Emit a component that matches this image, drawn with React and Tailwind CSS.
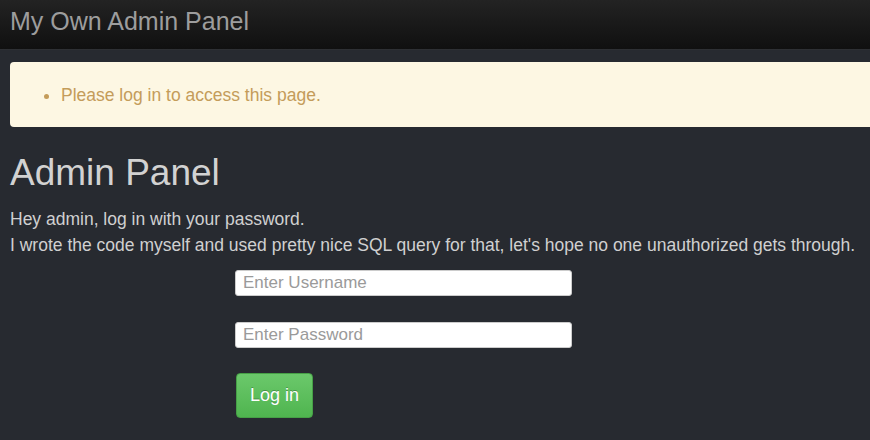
import React from 'react';

const font = { fontFamily: '"Liberation Sans", Arial, sans-serif' };

const App = () => {
  return (
    <div className="min-h-[440px] w-[870px] overflow-hidden bg-[#272a30]" style={font}>
      <nav className="h-[50px] bg-gradient-to-b from-[#232323] to-[#101010] border-b border-[#2e3034] flex items-center px-[10px]">
        <span className="text-[25px] leading-none text-[#9d9d9d] -mt-[6px]">My Own Admin Panel</span>
      </nav>

      <div className="pl-[10px] pt-[12px]">
        <div className="w-[900px] h-[65px] rounded-[4px] bg-[#fdf7e3] flex items-center">
          <ul className="list-disc pl-[51px] mt-[1px] text-[17.5px] text-[#c49c5a] marker:text-[#c49c5a]">
            <li>Please log in to access this page.</li>
          </ul>
        </div>
      </div>

      <div className="px-[10px]">
        <h1 className="text-[37px] leading-none text-[#d2d2d2] mt-[27px]">Admin Panel</h1>
        <p className="text-[17.5px] leading-[26px] text-[#d0d0d0] mt-[15px]">
          Hey admin, log in with your password.
          <br />
          I wrote the code myself and used pretty nice SQL query for that, let's hope no one unauthorized gets through.
        </p>

        <form className="ml-[225px] mt-[12px] flex flex-col items-start" onSubmit={(e) => e.preventDefault()}>
          <input
            type="text"
            placeholder="Enter Username"
            className="w-[337px] h-[26px] rounded-[3px] border border-[#cccccc] bg-white px-[7px] text-[17px] placeholder:text-[#9a9a9a] outline-none"
          />
          <input
            type="password"
            placeholder="Enter Password"
            className="mt-[26px] w-[337px] h-[26px] rounded-[3px] border border-[#cccccc] bg-white px-[7px] text-[17px] placeholder:text-[#9a9a9a] outline-none"
          />
          <button
            type="submit"
            className="mt-[25px] ml-[1px] w-[77px] h-[45px] rounded-[4px] border border-[#46a046] bg-gradient-to-b from-[#6bc86b] to-[#4fb54f] text-white text-[18px] [text-shadow:0_-1px_0_rgba(0,0,0,0.25)]"
          >
            Log in
          </button>
        </form>
      </div>
    </div>
  );
};

export default App;
